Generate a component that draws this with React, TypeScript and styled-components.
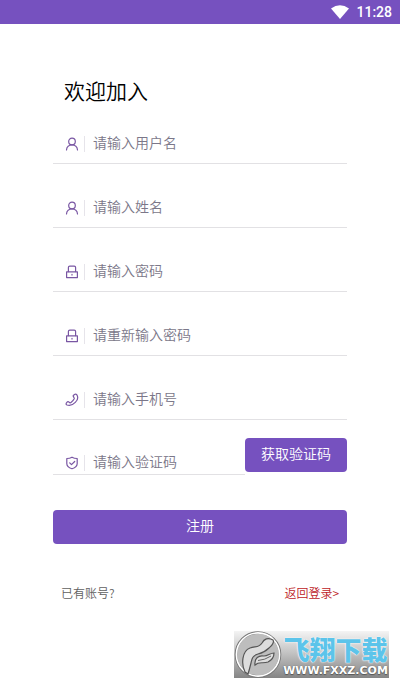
import React from "react";
import styled, { createGlobalStyle } from "styled-components";

const purple = "#7651bf";
const sans = `"Noto Sans CJK SC", "Noto Sans", sans-serif`;

const GlobalStyle = createGlobalStyle`
  * { box-sizing: border-box; }
  body { margin: 0; background: #fff; font-family: ${sans}; font-weight: 350; }
  button, input { font-family: inherit; font-weight: inherit; }
`;

const Screen = styled.div`
  position: relative;
  min-height: 100vh;
  background: #fff;
`;

const StatusBar = styled.header`
  display: flex;
  align-items: center;
  justify-content: flex-end;
  gap: 7px;
  height: 24px;
  padding-right: 8px;
  background: ${purple};
  color: #fff;
  font: 500 14px/24px Roboto, sans-serif;
`;

const Form = styled.form`
  display: flex;
  flex-direction: column;
  padding: 50px 53px 0;
`;

const Title = styled.h1`
  margin: 0 0 18px;
  padding-left: 11px;
  color: #000;
  font-size: 21px;
  font-weight: 350;
  line-height: 32px;
`;

const Fields = styled.div`
  display: flex;
  flex-direction: column;
  gap: 24px;
`;

const Row = styled.label<{ $compact?: boolean }>`
  display: flex;
  align-items: center;
  width: 100%;
  min-width: 0;
  height: ${(p) => (p.$compact ? "26px" : "40px")};
  padding: ${(p) => (p.$compact ? "0 0 2px 12px" : "0 0 4px 12px")};
  border-bottom: 1px solid #e2e1e4;
`;

const IconBox = styled.span`
  display: flex;
  align-items: center;
  height: 16px;
  margin-top: 4px;
  padding-right: 5px;
  border-right: 1px solid #e6e4ea;
`;

const Input = styled.input`
  flex: 1;
  min-width: 0;
  height: 22px;
  margin: 0;
  padding: 0 0 0 8px;
  border: 0;
  outline: 0;
  background: transparent;
  color: #333;
  font-size: 14px;
  line-height: 22px;
  &::placeholder { color: #7b7789; opacity: 1; }
`;

const CodeRow = styled.div`
  display: flex;
  align-items: flex-end;
  height: 37px;
  margin-top: 18px;
`;

const Button = styled.button`
  flex: none;
  height: 34px;
  padding: 0 16px 4px;
  border: 0;
  border-radius: 4px;
  background: ${purple};
  color: #fff;
  font-size: 14px;
  line-height: 30px;
  cursor: pointer;
`;

const CodeButton = styled(Button)`
  align-self: flex-start;
`;

const SubmitButton = styled(Button)`
  margin-top: 35px;
`;

const Footer = styled.div`
  display: flex;
  justify-content: space-between;
  margin-top: 40px;
  padding: 0 8px;
  color: #606060;
  font-size: 12px;
  line-height: 18px;
`;

const LoginLink = styled.a`
  color: #bd2226;
  text-decoration: none;
`;

const Watermark = styled.aside`
  position: absolute;
  right: 11px;
  bottom: 12px;
  display: flex;
  align-items: center;
  width: 155px;
  height: 47px;
  background: linear-gradient(#f4f4f4, #c4c4c4 45%, #858585);
`;

const Emblem = styled.svg`
  flex: none;
`;

const Brand = styled.div`
  display: flex;
  flex: 1;
  flex-direction: column;
  align-items: center;
  gap: 2px;
  padding-top: 4px;
  white-space: nowrap;
`;

const BrandName = styled.span`
  color: #5cc4ea;
  font-size: 26px;
  font-weight: 900;
  line-height: 26px;
  text-shadow: 0 0 1px #fff, 0 0 2px #fff;
`;

const BrandSite = styled.span`
  color: #fff;
  font: 700 11px/13px "DejaVu Sans", sans-serif;
  text-shadow: 0 0 1px #555, 0 1px 1px #555;
`;

const Icon = ({ children }: { children: React.ReactNode }) => (
  <svg width="14" height="14" viewBox="0 0 14 14" fill="none" stroke="#7956a3" strokeWidth="1.2" strokeLinecap="round" strokeLinejoin="round" aria-hidden="true">
    {children}
  </svg>
);

const icons = {
  user: (
    <Icon>
      <circle cx="7" cy="4.5" r="3.3" />
      <path d="M1.5 13C1.7 10 4 7.8 7 7.8S12.3 10 12.5 13" />
    </Icon>
  ),
  lock: (
    <Icon>
      <rect x="1.6" y="6.8" width="10.8" height="5.8" />
      <path d="M3.4 6.6V2.6Q3.4 1.2 4.8 1.2H9.2Q10.6 1.2 10.6 2.6V6.6M7 9.3v.8" />
    </Icon>
  ),
  phone: (
    <Icon>
      <path d="M8.5 2.3L10 1.2Q11 .7 11.7 1.7Q14.3 5.4 10.3 9.4Q6.2 13.6 2 12Q.6 11.3 1.3 10.2L2.2 9Q2.8 8.3 3.5 8.8L4.8 9.7Q5.4 10 6 9.5Q8.2 7.9 9.2 5.8Q9.4 5.2 9 4.6L8.3 3.4Q8 2.7 8.5 2.3Z" />
    </Icon>
  ),
  shield: (
    <Icon>
      <path d="M7 1.2Q9.2 2.5 12.2 2.5V7.5Q12.2 11.2 7 12.8Q1.8 11.2 1.8 7.5V2.5Q4.8 2.5 7 1.2Z" />
      <path d="M4.7 6.9L6.5 8.7L9.7 5.5" />
    </Icon>
  ),
};

type FieldProps = { icon: keyof typeof icons; hint: string; type?: string; compact?: boolean };

const Field = ({ icon, hint, type = "text", compact }: FieldProps) => (
  <Row $compact={compact}>
    <IconBox>{icons[icon]}</IconBox>
    <Input type={type} placeholder={hint} aria-label={hint} />
  </Row>
);

export default function App() {
  return (
    <Screen>
      <GlobalStyle />
      <StatusBar>
        <svg width="18" height="14" viewBox="0 0 18 14" aria-hidden="true">
          <path d="M0 3.6Q9-3.2 18 3.6L9 14Z" fill="#fff" />
        </svg>
        <time>11:28</time>
      </StatusBar>
      <Form onSubmit={(e) => e.preventDefault()}>
        <Title>欢迎加入</Title>
        <Fields>
          <Field icon="user" hint="请输入用户名" />
          <Field icon="user" hint="请输入姓名" />
          <Field icon="lock" hint="请输入密码" type="password" />
          <Field icon="lock" hint="请重新输入密码" type="password" />
          <Field icon="phone" hint="请输入手机号" type="tel" />
        </Fields>
        <CodeRow>
          <Field icon="shield" hint="请输入验证码" compact />
          <CodeButton type="button">获取验证码</CodeButton>
        </CodeRow>
        <SubmitButton type="submit">注册</SubmitButton>
        <Footer>
          <span>已有账号?</span>
          <LoginLink href="#login">返回登录&gt;</LoginLink>
        </Footer>
      </Form>
      <Watermark>
        <Emblem width="48" height="47" viewBox="0 0 48 47" aria-hidden="true">
          <circle cx="24" cy="23.5" r="22" fill="#bdbdbd" stroke="#777" strokeWidth="2.6" />
          <circle cx="24" cy="23.5" r="21.6" fill="none" stroke="#fff" strokeWidth="1.6" />
          <path d="M11 41C7 33 8 20 16 17C21 15 25 17 28 12C30 8 34 6 39 9C41 12 37 15 35 17C31 21 28 22 24 23C18 25 18 28 17 32C16 36 15 40 14 43Z" fill="#ddd" stroke="#555" strokeWidth="1.2" />
          <path d="M21 34C20 27 25 24 30 25C34 25 36 22 40 22C40 25 38 29 34 31C29 33 25 30 21 34Z" fill="#ddd" stroke="#555" strokeWidth="1.2" />
          <path d="M24 29.500Q31 29 37 25" fill="none" stroke="#666" />
        </Emblem>
        <Brand>
          <BrandName>飞翔下载</BrandName>
          <BrandSite>WWW.FXXZ.COM</BrandSite>
        </Brand>
      </Watermark>
    </Screen>
  );
}
